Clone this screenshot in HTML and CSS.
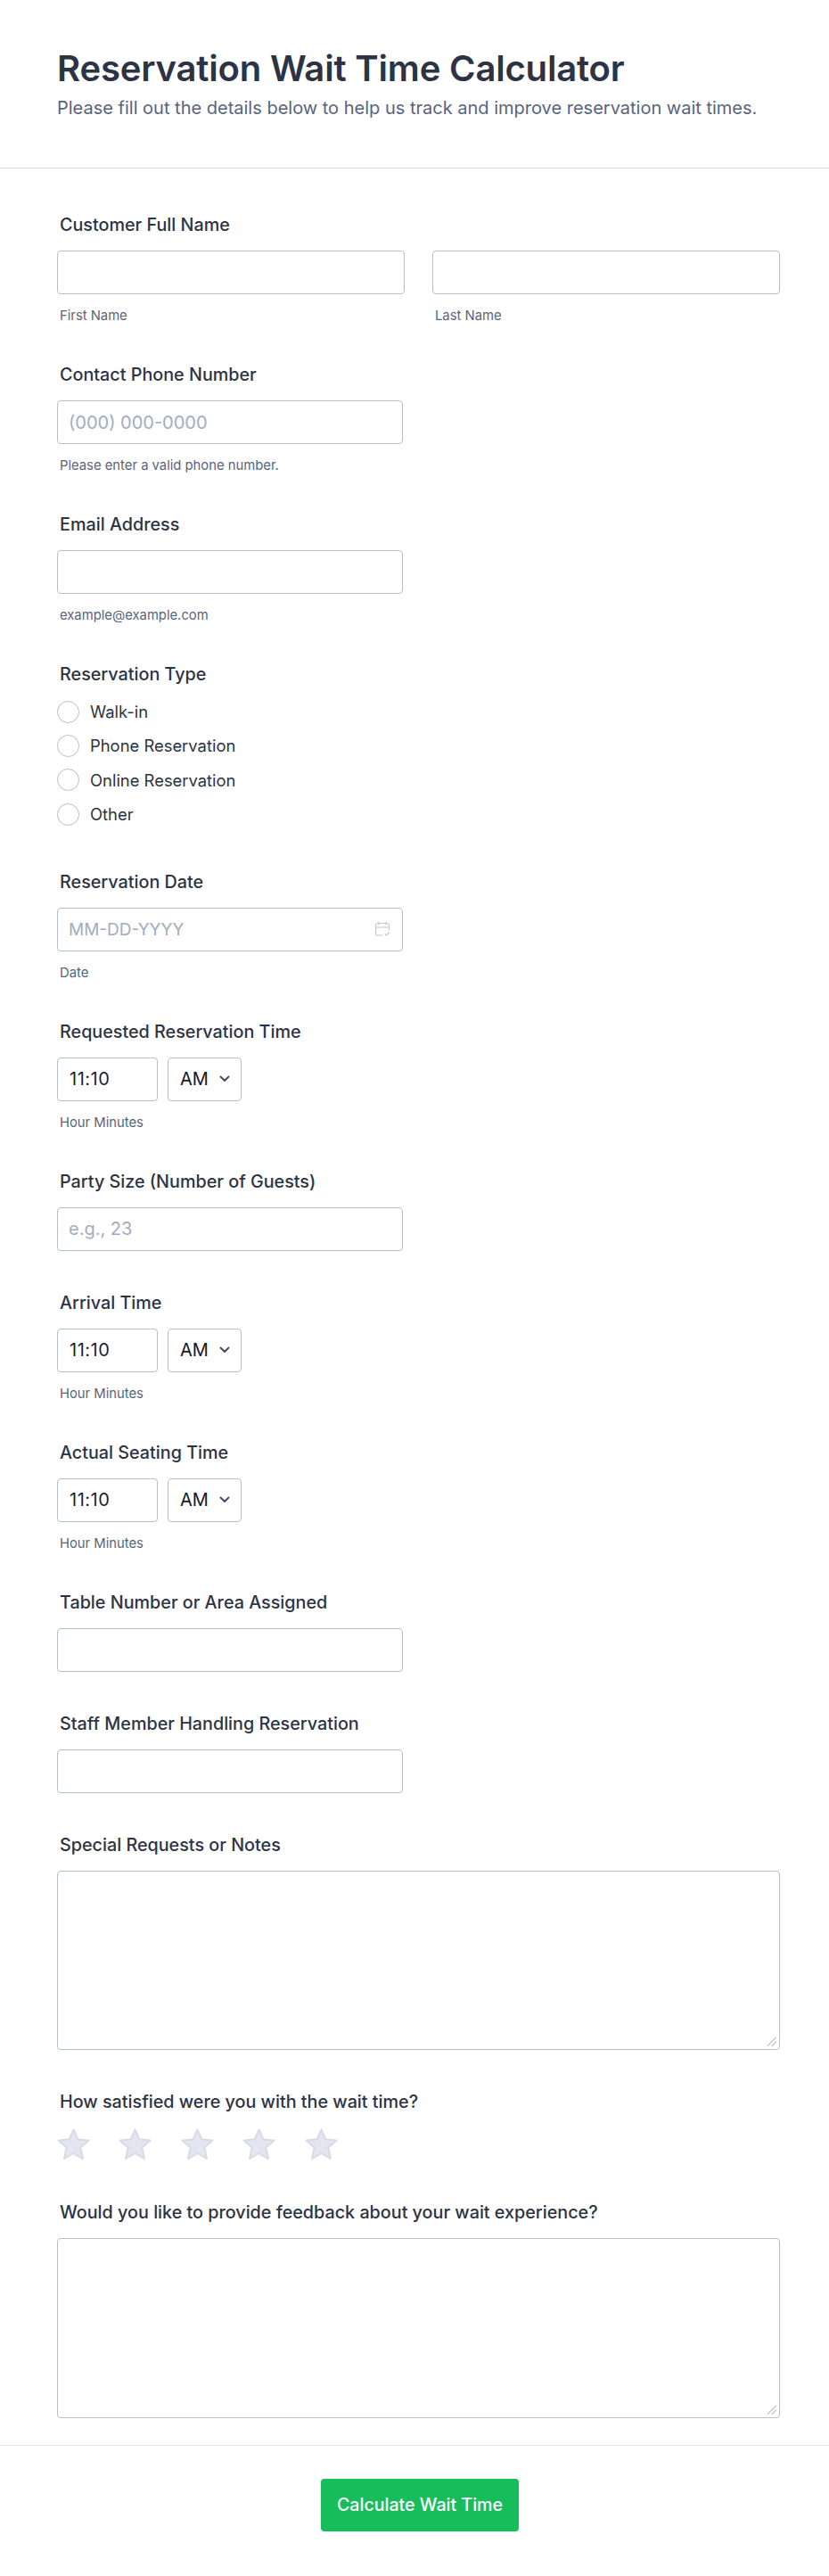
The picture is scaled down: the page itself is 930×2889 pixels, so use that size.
FILE: index.html
```html
<!DOCTYPE html>
<html lang="en">
<head>
<meta charset="utf-8">
<title>Reservation Wait Time Calculator</title>
<link rel="stylesheet" href="styles.css">
</head>
<body>
<header class="page-header">
  <h1 class="title">Reservation Wait Time Calculator</h1>
  <p class="subtitle">Please fill out the details below to help us track and improve reservation wait times.</p>
</header>
<form class="form">
  <div class="field">
    <label class="label">Customer Full Name</label>
    <div class="name-row">
      <div class="name-col"><input class="input" type="text"><span class="sub">First Name</span></div>
      <div class="name-col"><input class="input" type="text"><span class="sub">Last Name</span></div>
    </div>
  </div>
  <div class="field">
    <label class="label">Contact Phone Number</label>
    <input class="input short" type="text" placeholder="(000) 000-0000">
    <span class="sub">Please enter a valid phone number.</span>
  </div>
  <div class="field">
    <label class="label">Email Address</label>
    <input class="input short" type="text">
    <span class="sub">example@example.com</span>
  </div>
  <div class="field radios-field">
    <label class="label">Reservation Type</label>
    <div class="radios">
      <div class="radio-row"><span class="radio"></span><span class="radio-text">Walk-in</span></div>
      <div class="radio-row"><span class="radio"></span><span class="radio-text">Phone Reservation</span></div>
      <div class="radio-row"><span class="radio"></span><span class="radio-text">Online Reservation</span></div>
      <div class="radio-row"><span class="radio"></span><span class="radio-text">Other</span></div>
    </div>
  </div>
  <div class="field">
    <label class="label">Reservation Date</label>
    <div class="date-wrap">
      <input class="input date" type="text" placeholder="MM-DD-YYYY">
      <svg class="date-icon" width="18" height="18" viewBox="0 0 18 18" fill="none" stroke="#c3c8d6" stroke-width="1.2" stroke-linecap="round" stroke-linejoin="round"><path d="M9 16H3.500A2 2 0 0 1 1.500 14V4.500A2 2 0 0 1 3.500 2.500H14.500A2 2 0 0 1 16.500 4.500V10"/><path d="M1.500 7H16.500"/><path d="M5 1V4"/><path d="M13 1V4"/><path d="M12 14.500L13.500 16L16.500 13"/></svg>
    </div>
    <span class="sub">Date</span>
  </div>
  <div class="field">
    <label class="label">Requested Reservation Time</label>
    <div class="time-row">
      <input class="input time" type="text" value="11:10">
      <div class="select-wrap">
        <select class="select"><option>AM</option><option>PM</option></select>
        <svg class="chevron" width="12" height="8" viewBox="0 0 12 8" fill="none" stroke="#3a4560" stroke-width="1.800" stroke-linecap="round" stroke-linejoin="round"><path d="M1.500 1.500L6 6L10.500 1.500"/></svg>
      </div>
    </div>
    <span class="sub">Hour Minutes</span>
  </div>
  <div class="field">
    <label class="label">Party Size (Number of Guests)</label>
    <input class="input short" type="text" placeholder="e.g., 23">
  </div>
  <div class="field">
    <label class="label">Arrival Time</label>
    <div class="time-row">
      <input class="input time" type="text" value="11:10">
      <div class="select-wrap">
        <select class="select"><option>AM</option><option>PM</option></select>
        <svg class="chevron" width="12" height="8" viewBox="0 0 12 8" fill="none" stroke="#3a4560" stroke-width="1.800" stroke-linecap="round" stroke-linejoin="round"><path d="M1.500 1.500L6 6L10.500 1.500"/></svg>
      </div>
    </div>
    <span class="sub">Hour Minutes</span>
  </div>
  <div class="field">
    <label class="label">Actual Seating Time</label>
    <div class="time-row">
      <input class="input time" type="text" value="11:10">
      <div class="select-wrap">
        <select class="select"><option>AM</option><option>PM</option></select>
        <svg class="chevron" width="12" height="8" viewBox="0 0 12 8" fill="none" stroke="#3a4560" stroke-width="1.800" stroke-linecap="round" stroke-linejoin="round"><path d="M1.500 1.500L6 6L10.500 1.500"/></svg>
      </div>
    </div>
    <span class="sub">Hour Minutes</span>
  </div>
  <div class="field">
    <label class="label">Table Number or Area Assigned</label>
    <input class="input short" type="text">
  </div>
  <div class="field">
    <label class="label">Staff Member Handling Reservation</label>
    <input class="input short" type="text">
  </div>
  <div class="field">
    <label class="label">Special Requests or Notes</label>
    <textarea class="textarea"></textarea>
  </div>
  <div class="field">
    <label class="label">How satisfied were you with the wait time?</label>
    <div class="stars">
      <svg class="star" width="37" height="37" viewBox="0 0 37 37"><path d="M18.500 1.500L23.400 12.300L35.500 13.600L26.400 21.600L29 34L18.500 28L8 34L10.600 21.600L1.500 13.600L13.600 12.300Z"/></svg>
      <svg class="star" width="37" height="37" viewBox="0 0 37 37"><path d="M18.500 1.500L23.400 12.300L35.500 13.600L26.400 21.600L29 34L18.500 28L8 34L10.600 21.600L1.500 13.600L13.600 12.300Z"/></svg>
      <svg class="star" width="37" height="37" viewBox="0 0 37 37"><path d="M18.500 1.500L23.400 12.300L35.500 13.600L26.400 21.600L29 34L18.500 28L8 34L10.600 21.600L1.500 13.600L13.600 12.300Z"/></svg>
      <svg class="star" width="37" height="37" viewBox="0 0 37 37"><path d="M18.500 1.500L23.400 12.300L35.500 13.600L26.400 21.600L29 34L18.500 28L8 34L10.600 21.600L1.500 13.600L13.600 12.300Z"/></svg>
      <svg class="star" width="37" height="37" viewBox="0 0 37 37"><path d="M18.500 1.500L23.400 12.300L35.500 13.600L26.400 21.600L29 34L18.500 28L8 34L10.600 21.600L1.500 13.600L13.600 12.300Z"/></svg>
    </div>
  </div>
  <div class="field">
    <label class="label">Would you like to provide feedback about your wait experience?</label>
    <textarea class="textarea"></textarea>
  </div>
</form>
<footer class="footer">
  <button class="submit" type="button">Calculate Wait Time</button>
</footer>
</body>
</html>
```
FILE: styles.css
```css
* { box-sizing: border-box; }
html, body { margin: 0; padding: 0; }
body {
  background: #fff;
  font-family: Inter, "Liberation Sans", sans-serif;
  color: #2c3345;
}
.page-header {
  height: 189px;
  padding: 53px 64px 0;
  border-bottom: 1px solid #d8dae9;
}
.title {
  margin: 0;
  font-size: 40px;
  line-height: 48px;
  font-weight: 600;
  letter-spacing: -0.17px;
  color: #2c3345;
}
.subtitle {
  margin: 6px 0 0;
  font-size: 20px;
  line-height: 28px;
  font-weight: 400;
  color: #57647e;
}
.form {
  padding: 53px 55px 0 64px;
  display: flex;
  flex-direction: column;
  gap: 48px;
}
.field { display: flex; flex-direction: column; }
.label {
  display: block;
  padding-left: 3px;
  margin-bottom: 19px;
  font-size: 19.75px;
  line-height: 20px;
  font-weight: 450;
  color: #2c3345;
}
.name-row { display: flex; gap: 31px; }
.name-col { flex: 1; display: flex; flex-direction: column; }
.input {
  display: block;
  width: 100%;
  height: 49px;
  padding: 0 12px;
  border: 1px solid #b8bdc9;
  border-radius: 4px;
  background: #fff;
  font-family: inherit;
  font-size: 20px;
  color: #1a1f2e;
  outline: none;
}
.input::placeholder { color: #9fadbf; opacity: 1; }
.input.short { width: 388px; }
.input.date { font-size: 19px; }
.sub {
  display: block;
  padding-left: 3px;
  margin-top: 15px;
  margin-bottom: -1px;
  font-size: 14.8px;
  line-height: 18px;
  color: #57647e;
}
.radios-field { margin-bottom: -1.5px; }
.radios-field .label { margin-bottom: 12.9px; }
.radios { display: flex; flex-direction: column; }
.radio-row { display: flex; align-items: center; gap: 12px; height: 38.4px; }
.radio {
  width: 25px;
  height: 25px;
  border: 1px solid #b8bdc9;
  border-radius: 50%;
  background: #fff;
  flex: none;
}
.radio-text { font-size: 18.4px; line-height: 24px; color: #2c3345; }
.date-wrap { position: relative; width: 388px; }
.date-icon { position: absolute; right: 14px; top: 15px; }
.time-row { display: flex; gap: 11px; }
.input.time { width: 113px; padding: 0 13px; letter-spacing: 0.5px; }
.select-wrap { position: relative; width: 83px; }
.select {
  appearance: none;
  display: block;
  width: 100%;
  height: 49px;
  padding: 0 13px;
  border: 1px solid #b8bdc9;
  border-radius: 4px;
  background: #fff;
  font-family: inherit;
  font-size: 20px;
  color: #14171f;
}
.chevron { position: absolute; right: 13px; top: 20px; }
.textarea {
  display: block;
  width: 100%;
  height: 201.4px;
  border: 1px solid #b8bdc9;
  border-radius: 4px;
  background: #fff;
  outline: none;
}
.textarea::-webkit-resizer {
  background: linear-gradient(135deg, transparent 44%, #c8ccd8 44%, #c8ccd8 52%, transparent 52%, transparent 68%, #c8ccd8 68%, #c8ccd8 76%, transparent 76%) no-repeat right 3px bottom 3px / 10px 10px;
}
.stars { display: flex; gap: 32.4px; margin: 1px 0 -1px; }
.star { fill: #e3e6f0; stroke: #d8dbe6; stroke-width: 2; stroke-linejoin: round; }
.footer {
  margin-top: 30px;
  height: 147px;
  padding: 37px 0 0 12px;
  border-top: 1px solid #e3e5f0;
  display: flex;
  justify-content: center;
  align-items: flex-start;
}
.submit {
  width: 222px;
  height: 59px;
  border: 0;
  border-radius: 4px;
  background: #18bd5b;
  color: #fff;
  font-family: Inter, sans-serif;
  font-size: 19.6px;
  font-weight: 500;
}
```
